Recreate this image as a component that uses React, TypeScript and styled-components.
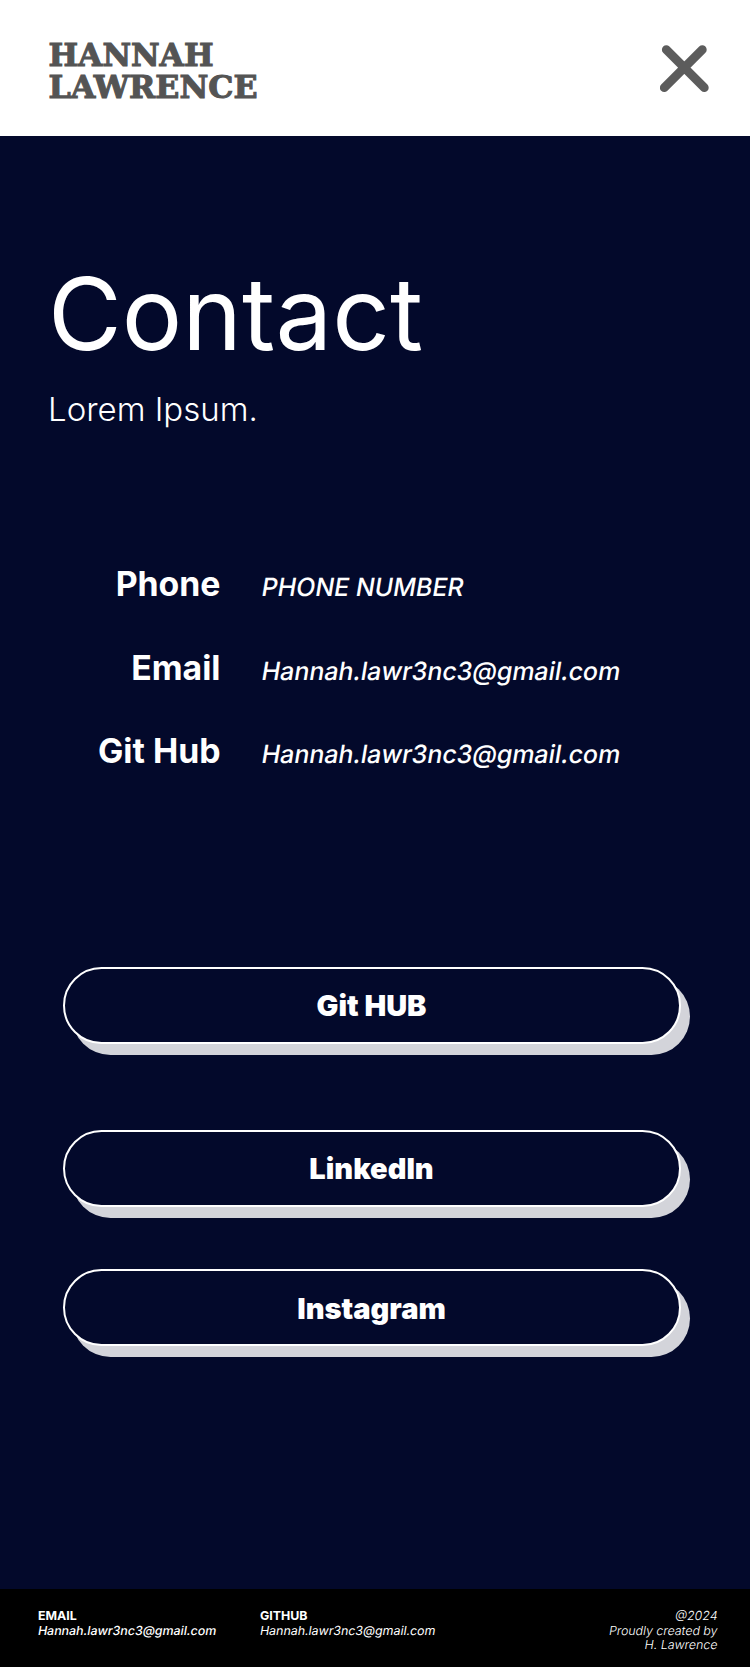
import React from 'react';
import styled, { createGlobalStyle } from 'styled-components';

const GlobalStyle = createGlobalStyle`
  * { box-sizing: border-box; }
  body { margin: 0; background: #03092b; font-family: Inter, sans-serif; font-optical-sizing: none; color: #fff; }
  h1, p, dl, dd, dt { margin: 0; }
`;
const Page = styled.div`
  width: 750px;
  height: 1667px;
  display: flex;
  flex-direction: column;
`;
const Header = styled.header`
  height: 136px;
  background: #fff;
  color: #545454;
  display: flex;
  justify-content: space-between;
  padding: 40px 41px 0 49px;
`;
const Logo = styled.div`
  font: 700 32px/31px "DejaVu Serif", serif;
  display: flex;
  flex-direction: column;
`;
const Word = styled.svg<{ $w: number }>`
  width: ${(p) => p.$w}px;
  height: 31px;
  overflow: visible;
  fill: currentColor;
  stroke: currentColor;
  stroke-width: 1.1px;
`;
const CloseButton = styled.button`
  border: 0;
  background: none;
  padding: 5px 0 0;
  color: #5c5c5c;
  height: 54px;
  width: 49px;
`;
const Main = styled.main`flex: 1;`;
const Title = styled.h1`
  margin: 117px 0 0 48px;
  font-size: 101px;
  line-height: 120px;
  font-weight: 375;
`;
const Subtitle = styled.p`
  margin: 15px 0 0 48px;
  font-size: 33px;
  line-height: 42px;
  font-weight: 300;
`;
const Details = styled.dl`
  margin: 133px 0 0;
`;
const Row = styled.div`
  display: grid;
  grid-template-columns: 220.5px 1fr;
  column-gap: 41.5px;
  align-items: baseline;
  height: 83.5px;
`;
const Label = styled.dt`
  text-align: right;
  font-size: 33.8px;
  line-height: 42px;
  font-weight: 700;
`;
const Value = styled.dd`
  font-size: 25px;
  font-weight: 500;
  letter-spacing: -0.05px;
  transform: skewX(-9.4deg);
`;
const Links = styled.nav`
  margin: 153px 0 0 62.5px;
  display: flex;
  flex-direction: column;
`;
const LinkButton = styled.button<{ $gap: number }>`
  width: 618px;
  height: 77px;
  margin-bottom: ${(p) => p.$gap}px;
  padding: 1px 0 0;
  border: 2px solid #fff;
  border-radius: 39px;
  background: #03092b;
  box-shadow: 9px 11px 0 #d3d4da;
  color: #fff;
  font: 900 29px Inter, sans-serif;
`;
const Footer = styled.footer`
  height: 78px;
  background: #000;
  padding: 20px 32px 0 38px;
  display: grid;
  grid-template-columns: 222px 1fr auto;
  font-size: 12.4px;
  line-height: 14.7px;
`;
const FooterLabel = styled.p`font-weight: 700;`;
const FooterValue = styled.p<{ $weight: number }>`
  font-weight: ${(p) => p.$weight};
  transform: skewX(-9.4deg);
`;
const Credit = styled.div`text-align: right;`;

export default function App() {
  return (
    <Page>
      <GlobalStyle />
      <Header>
        <Logo>
          <Word $w={165}><text x="-0.5" y="26.2" textLength="165" lengthAdjust="spacingAndGlyphs">HANNAH</text></Word>
          <Word $w={209}><text x="-0.5" y="26.5" textLength="209" lengthAdjust="spacingAndGlyphs">LAWRENCE</text></Word>
        </Logo>
        <CloseButton aria-label="Close">
          <svg width="49" height="49" viewBox="0 0 49 49" stroke="currentColor" strokeWidth="8.8" strokeLinecap="round"><path d="M6.3 4.7L44.3 42.7M42.3 4.7L4.3 42.7" /></svg>
        </CloseButton>
      </Header>
      <Main>
        <Title>Contact</Title>
        <Subtitle>Lorem Ipsum.</Subtitle>
        <Details>
          <Row><Label>Phone</Label><Value>PHONE NUMBER</Value></Row>
          <Row><Label>Email</Label><Value>Hannah.lawr3nc3@gmail.com</Value></Row>
          <Row><Label>Git Hub</Label><Value>Hannah.lawr3nc3@gmail.com</Value></Row>
        </Details>
        <Links>
          <LinkButton $gap={86}>Git HUB</LinkButton>
          <LinkButton $gap={62.5}>LinkedIn</LinkButton>
          <LinkButton $gap={0}>Instagram</LinkButton>
        </Links>
      </Main>
      <Footer>
        <div><FooterLabel>EMAIL</FooterLabel><FooterValue $weight={500}>Hannah.lawr3nc3@gmail.com</FooterValue></div>
        <div><FooterLabel>GITHUB</FooterLabel><FooterValue $weight={400}>Hannah.lawr3nc3@gmail.com</FooterValue></div>
        <Credit>
          <FooterValue $weight={300}>@2024</FooterValue>
          <FooterValue $weight={300}>Proudly created by</FooterValue>
          <FooterValue $weight={300}>H. Lawrence</FooterValue>
        </Credit>
      </Footer>
    </Page>
  );
}
